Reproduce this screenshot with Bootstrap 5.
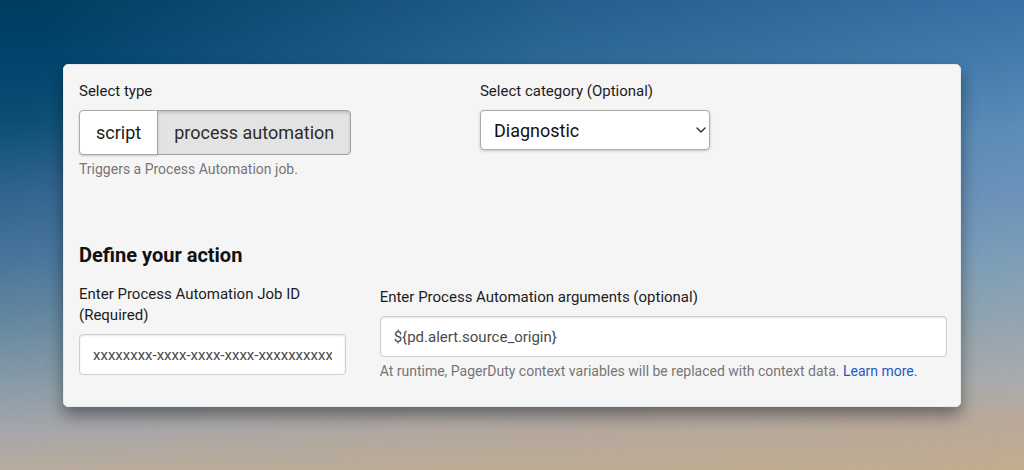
<!DOCTYPE html>
<html lang="en">

    <head>
        <meta charset="UTF-8">
        <meta name="viewport" content="width=device-width, initial-scale=1.0">
        <title>Automation Action</title>
        <!-- Bootstrap CSS -->
        <link href="https://cdn.jsdelivr.net/npm/bootstrap@5.3.0/dist/css/bootstrap.min.css" rel="stylesheet">

        <style>
            body {
                position: relative;
                z-index: 0;
                min-height: 100vh;
                padding: 64px 63px;
                font-family: Roboto, "Liberation Sans", sans-serif;
                font-size: 15px;
                line-height: 21px;
                color: #1c1c1c;
                background: linear-gradient(180deg, #3c74aa 0%, #4a80b1 13%, #608fba 28%, #7095bc 43%, #80a0b9 56%, #96a6b0 70%, #ababac 81%, #bba99a 90%, #c2ad8e 100%);
            }

            /* darker, cooler sky that fades out towards the right */
            body::before {
                content: "";
                position: absolute;
                inset: 0;
                z-index: -1;
                background: linear-gradient(180deg, #003d5f 0%, #00436c 13%, #0c4f74 26%, #30628c 40%, #47749b 55%, #63869f 68%, #8a9ca8 83%, #a3a5ab 91%, #b8ac9f 100%);
                -webkit-mask-image: linear-gradient(100deg, #000 4%, rgba(0, 0, 0, 0.4) 50%, transparent 98%);
                mask-image: linear-gradient(100deg, #000 4%, rgba(0, 0, 0, 0.4) 50%, transparent 98%);
            }

            .action-panel {
                background-color: #f5f5f5;
                border: 1px solid #e6e9eb;
                border-radius: 5px;
                padding: 16px 13px 24px 15px;
                box-shadow: 0 8px 16px rgba(0, 0, 0, 0.4);
            }

            .form-label {
                margin-bottom: 8px;
            }

            .type-col {
                flex: 0 0 auto;
                width: 44.45%;
            }

            .form-row {
                --bs-gutter-x: 34px;
            }

            .btn-type {
                --bs-btn-font-size: 18px;
                --bs-btn-line-height: 27px;
                --bs-btn-padding-x: 16px;
                --bs-btn-padding-y: 8px;
                --bs-btn-color: #1c1c1c;
                --bs-btn-bg: #fff;
                --bs-btn-border-color: #ababab;
                --bs-btn-border-radius: 4px;
                --bs-btn-hover-bg: #f5f5f5;
                --bs-btn-hover-border-color: #ababab;
                --bs-btn-active-color: #2c2c2c;
                --bs-btn-active-bg: #e3e3e3;
                --bs-btn-active-border-color: #a0a0a0;
                box-shadow: 0 1px 2px rgba(0, 0, 0, 0.2);
            }

            .btn-type.active {
                box-shadow: inset 0 2px 3px rgba(0, 0, 0, 0.14);
            }

            .category-select {
                width: 230px;
                height: 40px;
                padding: 0 28px 0 13px;
                font-size: 18px;
                color: #111;
                border-color: #ababab;
                border-radius: 4px;
                background-color: #fff;
                background-image: url("data:image/svg+xml,%3csvg xmlns='http://www.w3.org/2000/svg' viewBox='0 0 10 6'%3e%3cpath fill='none' stroke='%23222' stroke-width='1.2' stroke-linecap='round' stroke-linejoin='round' d='M1 1l4 4 4-4'/%3e%3c/svg%3e");
                background-position: right 3px center;
                background-size: 10px 6px;
                box-shadow: 0 1px 3px rgba(0, 0, 0, 0.2);
            }

            .action-input {
                height: 41px;
                padding: 0 13px;
                font-size: 15px;
                color: #4a4a4a;
                border: 1px solid #cfcfcf;
                border-radius: 4px;
                box-shadow: inset 0 1px 2px rgba(0, 0, 0, 0.1);
            }

            .form-text {
                margin-top: 4px;
                font-size: 14px;
                color: #757575;
            }

            .form-text a {
                color: #2457c9;
            }

            .action-title {
                margin: 63px 0 17px;
                font-size: 20px;
                line-height: 24px;
                font-weight: 700;
                color: #111;
            }

            .args-col {
                padding-top: 3px;
            }
        </style>
    </head>

    <body>
        <form class="action-panel">
            <div class="row form-row">
                <div class="type-col">
                    <div class="form-label" id="typeLabel">Select type</div>
                    <div class="btn-group d-flex w-auto" role="group" aria-labelledby="typeLabel">
                        <button type="button" class="btn btn-type flex-grow-0">script</button>
                        <button type="button" class="btn btn-type flex-grow-0 active" aria-pressed="true">process automation</button>
                    </div>
                    <div class="form-text">Triggers a Process Automation job.</div>
                </div>
                <div class="col">
                    <label class="form-label d-block" for="category">Select category (Optional)</label>
                    <select class="form-select category-select" id="category">
                        <option selected>Diagnostic</option>
                    </select>
                </div>
            </div>

            <h2 class="action-title">Define your action</h2>

            <div class="row form-row">
                <div class="col-4">
                    <label class="form-label" for="jobId">Enter Process Automation Job ID (Required)</label>
                    <input type="text" class="form-control action-input" id="jobId" value="xxxxxxxx-xxxx-xxxx-xxxx-xxxxxxxxxxxx">
                </div>
                <div class="col-8 args-col">
                    <label class="form-label" for="jobArgs">Enter Process Automation arguments (optional)</label>
                    <input type="text" class="form-control action-input" id="jobArgs" value="${pd.alert.source_origin}">
                    <div class="form-text">At runtime, PagerDuty context variables will be replaced with context data. <a class="text-decoration-none" href="#">Learn more.</a></div>
                </div>
            </div>
        </form>

        <script src="https://cdn.jsdelivr.net/npm/bootstrap@5.3.0/dist/js/bootstrap.bundle.min.js"></script>
    </body>

</html>
